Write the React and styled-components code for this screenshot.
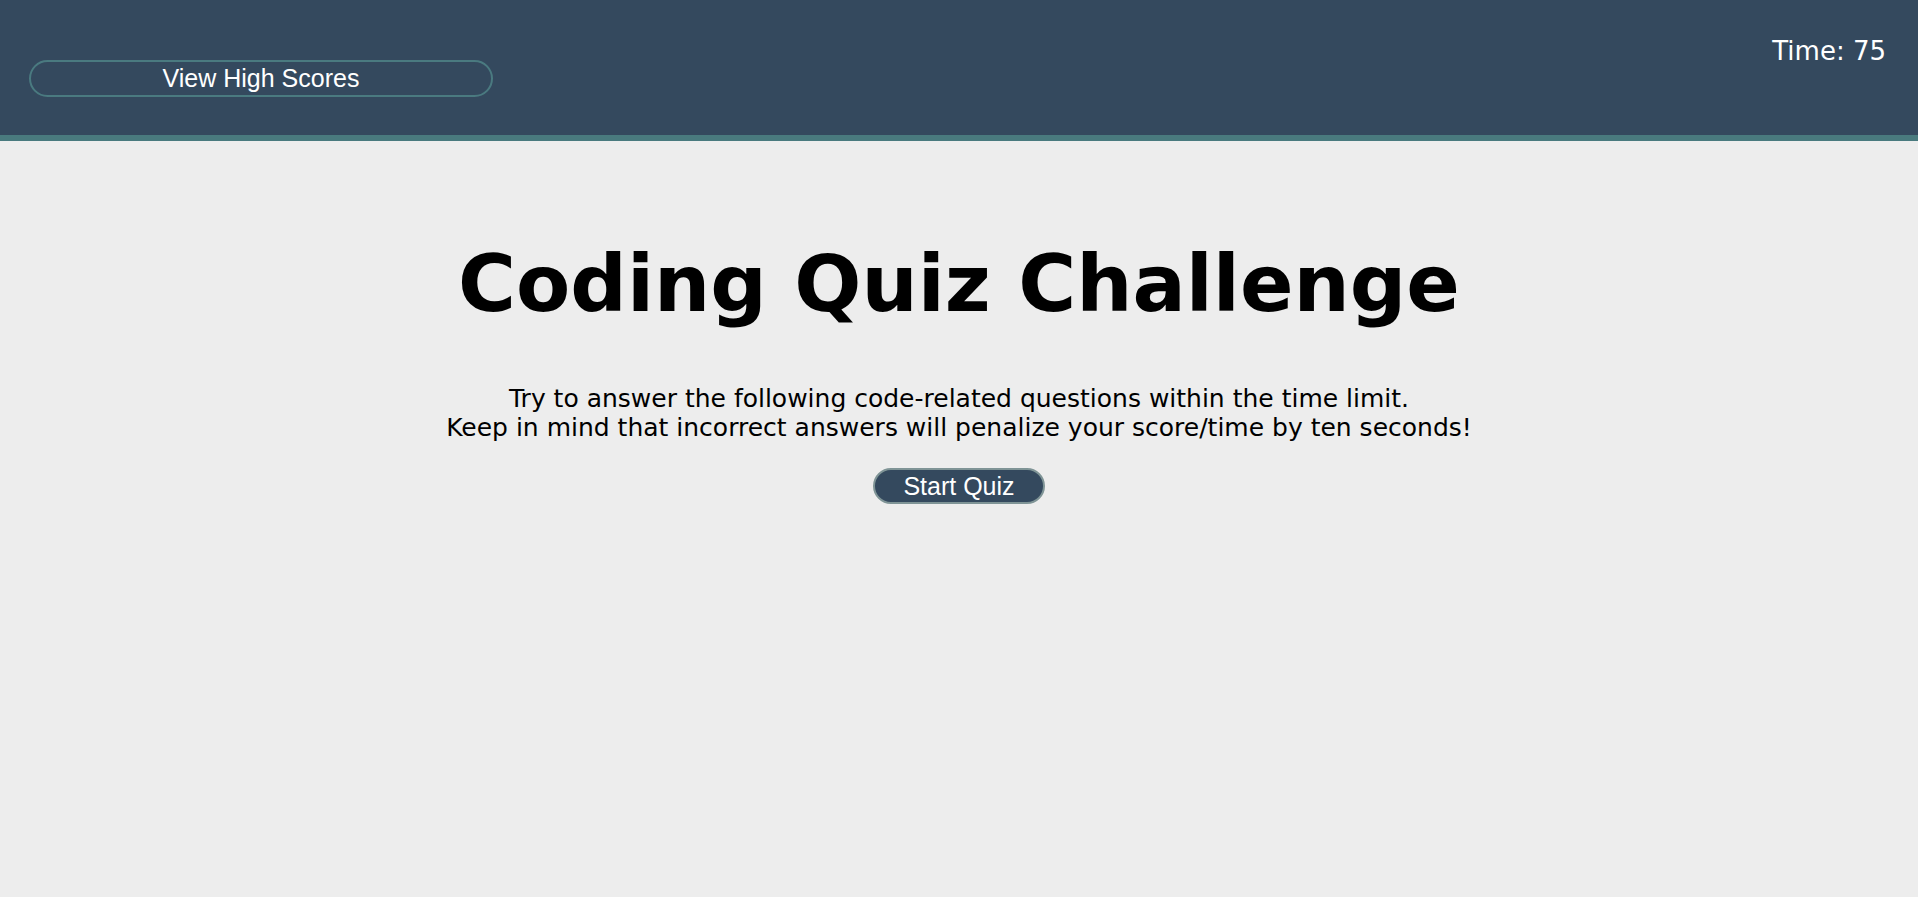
import React from "react";
import styled, { createGlobalStyle } from "styled-components";

const GlobalStyle = createGlobalStyle`
  html, body {
    margin: 0;
    padding: 0;
    background-color: #ededed;
    font-family: "DejaVu Sans", Verdana, sans-serif;
  }
`;

const App = () => {
  return (
    <>
      <GlobalStyle />
      <Header>
        <HighScoresBtn>View High Scores</HighScoresBtn>
        <Timer>Time: 75</Timer>
      </Header>
      <Main>
        <Title>Coding Quiz Challenge</Title>
        <Intro>
          Try to answer the following code-related questions within the time limit.
          <br />
          Keep in mind that incorrect answers will penalize your score/time by ten seconds!
        </Intro>
        <StartBtn>Start Quiz</StartBtn>
      </Main>
    </>
  );
};

const Header = styled.header`
  display: flex;
  justify-content: space-between;
  align-items: flex-start;
  height: 135px;
  padding: 0 32px 0 29px;
  background-color: #34495e;
  border-bottom: 6px solid #497a7e;
`;

const HighScoresBtn = styled.button`
  width: 464px;
  height: 37px;
  margin-top: 60px;
  padding: 0;
  background-color: transparent;
  color: #fff;
  border: 2px solid #4a7a80;
  border-radius: 20px;
  font-family: "Liberation Sans", Arial, sans-serif;
  font-size: 25px;
  cursor: pointer;
`;

const Timer = styled.div`
  margin-top: 36px;
  color: #fff;
  font-size: 26px;
`;

const Main = styled.main`
  display: flex;
  flex-direction: column;
  align-items: center;
  text-align: center;
  padding-top: 97px;
`;

const Title = styled.h1`
  margin: 0;
  font-size: 79px;
  font-weight: bold;
  color: #000;
`;

const Intro = styled.p`
  margin: 54px 0 0;
  font-size: 25px;
  color: #000;
`;

const StartBtn = styled.button`
  margin-top: 26px;
  height: 36px;
  padding: 0 28px;
  background-color: #34495e;
  color: #fff;
  border: 2px solid #7f9496;
  border-radius: 20px;
  font-family: "Liberation Sans", Arial, sans-serif;
  font-size: 25px;
  cursor: pointer;
`;

export default App;
